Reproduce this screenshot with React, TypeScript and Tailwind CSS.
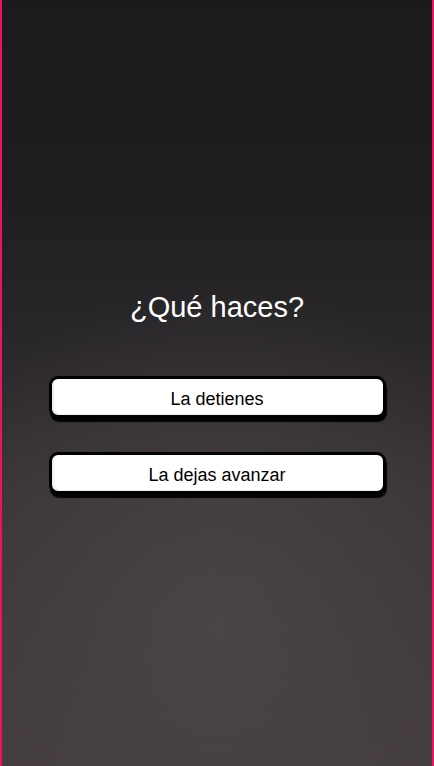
export default function App() {
  const choices = ["La detienes", "La dejas avanzar"];

  return (
    <div
      className="h-[766px] w-full overflow-hidden border-x-2 border-[#ea1461] bg-[radial-gradient(ellipse_75%_45%_at_50%_82%,rgba(76,70,72,0.85)_0%,rgba(76,70,72,0)_100%),linear-gradient(to_bottom,#1b1a1d_0%,#1e1d20_25%,#2a272a_45%,#3a3436_65%,#443c3e_100%)]"
      style={{ fontFamily: '"Liberation Sans", Arial, sans-serif' }}
    >
      <div className="flex flex-col items-center pt-[288px]">
        <h1 className="text-[29px] leading-[38px] text-white">¿Qué haces?</h1>
        <div className="mt-[50px] flex flex-col gap-[34px]">
          {choices.map((label) => (
            <button
              key={label}
              type="button"
              className="flex h-[42px] w-[337px] items-center justify-center rounded-[9px] border-[3px] border-black bg-white pt-[4px] text-[18px] text-black shadow-[1px_4px_1px_rgba(0,0,0,0.95),inset_2px_-1px_2px_rgba(0,0,0,0.08)]"
            >
              {label}
            </button>
          ))}
        </div>
      </div>
    </div>
  );
}
